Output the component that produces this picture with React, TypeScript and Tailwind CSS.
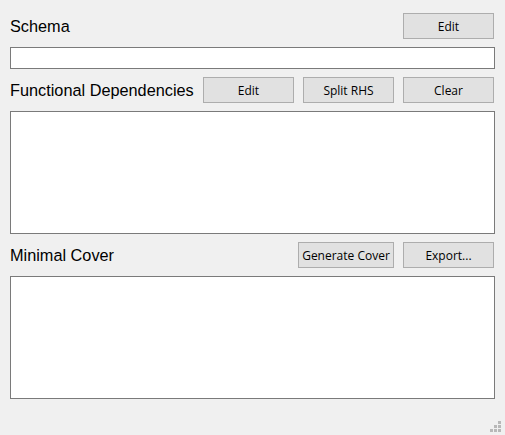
import React from "react";

const labelFont = { fontFamily: '"Liberation Sans", Arial, sans-serif' };

const WinButton = ({ label, width = "w-[91px]" }: { label: string; width?: string }) => (
  <button
    type="button"
    className={`${width} h-[26px] shrink-0 bg-[#e1e1e1] border border-[#adadad] text-[12px] text-black leading-none pt-[1px]`}
    style={{ fontFamily: '"Open Sans", "Noto Sans", sans-serif' }}
  >
    {label}
  </button>
);

const Grip = () => (
  <svg width="12" height="12" viewBox="0 0 12 12" className="absolute right-[3px] bottom-[2px]">
    <rect x="8" y="0" width="3" height="3" fill="#b8b8b8" />
    <rect x="4" y="4" width="3" height="3" fill="#b8b8b8" />
    <rect x="8" y="4" width="3" height="3" fill="#b8b8b8" />
    <rect x="0" y="8" width="3" height="3" fill="#b8b8b8" />
    <rect x="4" y="8" width="3" height="3" fill="#b8b8b8" />
    <rect x="8" y="8" width="3" height="3" fill="#b8b8b8" />
  </svg>
);

export default function App() {
  return (
    <div className="relative w-[505px] h-[435px] bg-[#f0f0f0] pl-[10px] pr-[10px] pt-[13px] overflow-hidden">
      <div className="flex items-center h-[26px] pr-[1px]">
        <span className="text-[16.3px] text-black pt-[1px]" style={labelFont}>
          Schema
        </span>
        <div className="ml-auto">
          <WinButton label="Edit" />
        </div>
      </div>

      <div className="mt-[8px] h-[22px] bg-white border border-[#7a7a7a]" />

      <div className="mt-[8px] flex items-center h-[26px] pr-[1px]">
        <span className="text-[16.3px] text-black whitespace-nowrap pt-[1px]" style={labelFont}>
          Functional Dependencies
        </span>
        <div className="ml-auto flex gap-[9px]">
          <WinButton label="Edit" />
          <WinButton label="Split RHS" />
          <WinButton label="Clear" />
        </div>
      </div>

      <div className="mt-[8px] h-[123px] bg-white border border-[#7a7a7a]" />

      <div className="mt-[8px] flex items-center h-[26px] pr-[1px]">
        <span className="text-[16.3px] text-black pt-[1px]" style={labelFont}>
          Minimal Cover
        </span>
        <div className="ml-auto flex gap-[9px]">
          <WinButton label="Generate Cover" width="w-[96px]" />
          <WinButton label="Export..." />
        </div>
      </div>

      <div className="mt-[8px] h-[123px] bg-white border border-[#7a7a7a]" />

      <Grip />
    </div>
  );
}
